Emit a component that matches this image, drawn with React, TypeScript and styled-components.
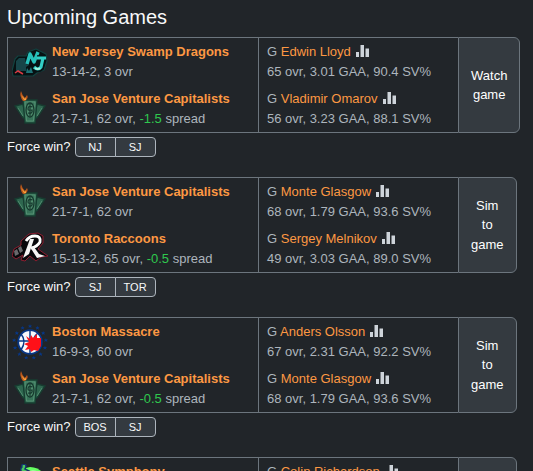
import React from "react";
import styled, { createGlobalStyle } from "styled-components";

const GlobalStyle = createGlobalStyle`
  *, *::before, *::after { box-sizing: border-box; }
  body {
    margin: 0;
    background: #212529;
    color: #f8f9fa;
    font-family: "Liberation Sans", Arial, sans-serif;
    font-size: 13px;
    line-height: 1.5;
  }
`;

const Page = styled.main`
  padding: 5px 7px 0;
`;

const Heading = styled.h2`
  margin: 0 0 8px;
  font-size: 20px;
  line-height: 24px;
  font-weight: 400;
`;

const GameList = styled.div`
  display: flex;
  flex-direction: column;
  gap: 20px;
`;

const Card = styled.div`
  display: flex;
`;

const Matchup = styled.div`
  display: grid;
  flex: 1 1 0;
  grid-template-columns: minmax(0, 5fr) minmax(0, 4fr);
  max-width: 451px;
  border: 1px solid #6c757d;
  border-right: 0;
`;

const Column = styled.div<{ $divided?: boolean }>`
  display: flex;
  flex-direction: column;
  gap: 8px;
  padding: 4px ${(p) => (p.$divided ? 8 : 4)}px;
  border-left: ${(p) => (p.$divided ? "1px solid #6c757d" : "0")};
  white-space: nowrap;
`;

const TeamRow = styled.div`
  display: flex;
  align-items: center;
  gap: 4px;
`;

const LogoSvg = styled.svg`
  width: 36px;
  height: 36px;
  flex: none;
`;

const Details = styled.div`
  color: #adb5bd;
`;

const Line = styled.div`
  height: 20px;
  line-height: 20px;

  & + & {
    height: 19px;
    line-height: 19px;
  }
`;

const Link = styled.a<{ $bold?: boolean }>`
  color: #fd9843;
  font-weight: ${(p) => (p.$bold ? 700 : 400)};
  text-decoration: none;

  &:hover { text-decoration: underline; }
`;

const Spread = styled.span`
  color: #2fc84e;
`;

const StatsButton = styled.button`
  margin: 0 0 0 5px;
  padding: 0;
  border: 0;
  background: none;
  color: #ced4da;
  line-height: 1;
  vertical-align: -2px;
  cursor: pointer;

  svg { display: block; }
`;

const ActionButton = styled.button`
  width: min-content;
  padding: 0 12px;
  border: 1px solid #6c757d;
  border-radius: 0 6px 6px 0;
  background: #343a40;
  color: #fff;
  font: inherit;
  cursor: pointer;
`;

const ForceRow = styled.div`
  display: flex;
  align-items: center;
  gap: 4px;
  height: 20px;
  margin-top: 4px;
`;

const ForceGroup = styled.div`
  display: flex;
`;

const ForceButton = styled.button`
  width: 41px;
  height: 20px;
  padding: 0;
  border: 1px solid #adb5bd;
  border-radius: 4px 0 0 4px;
  background: #343a40;
  color: #f8f9fa;
  font: inherit;
  font-size: 11px;
  line-height: 18px;
  cursor: pointer;

  & + & {
    margin-left: -1px;
    border-radius: 0 4px 4px 0;
  }
`;

type TeamKey = "NJ" | "SJ" | "TOR" | "BOS" | "SEA";

function SwampDragonsLogo() {
  return (
    <LogoSvg viewBox="0 0 36 36" aria-hidden="true">
      <path d="M3 15 6 12H14L16 8 24 5 34 10 35 17 32 26 25 29 21 32H1L0 27Z" fill="#071113" stroke="#12413f" strokeWidth="1.2" strokeLinejoin="round" />
      <path d="M4 17 7 14H13L14 20 17 21 14 23V27H4Z" fill="#174448" />
      <path d="M14 29 15 24 17 27 19 23 21 29Z" fill="#1c7377" />
      <path d="M3 29 6 27 11 30" fill="none" stroke="#d83b43" strokeWidth="1.500" />
      <path d="M15 20 18 10 22 18 26 8" fill="none" stroke="#27c0ba" strokeWidth="3.4" strokeLinejoin="round" />
      <path d="M25 14H34M31 14 29 24Q26 27 22 23" fill="none" stroke="#061315" strokeWidth="5.5" strokeLinejoin="round" />
      <path d="M25 14H34M31 14 29 23Q26 27 22 23" fill="none" stroke="#32cec5" strokeWidth="3.2" strokeLinejoin="round" />
      <path d="M28 24Q26 26 23 24" fill="none" stroke="#a2f0db" strokeWidth="2" />
    </LogoSvg>
  );
}

function VentureCapitalistsLogo() {
  return (
    <LogoSvg viewBox="0 0 36 36" aria-hidden="true">
      <path d="M3 15 11 13 14 28 11 27Z M25 13 33 15 25 27 22 28Z" fill="#2e674f" stroke="#173c30" strokeWidth="1.4" />
      <path d="M6 17 11 25M30 17 25 25" fill="none" stroke="#508b6e" />
      <path d="M11 9H25L23 32H13Z" fill="#377359" stroke="#173e31" strokeWidth="1.3" />
      <path d="M13 11H23L21.500 30H14.500Z" fill="none" stroke="#5b9879" strokeWidth=".8" />
      <ellipse cx="18" cy="19" rx="4" ry="7" fill="#4f8c6d" stroke="#16382d" strokeWidth="1.3" />
      <path d="M20.500 16Q16 14 16 18 16 20 20 19 21 23 16 22M18 13V25" fill="none" stroke="#16382d" strokeWidth="1.2" />
      <path d="M11 10Q7 5 9 0 10 4 13 7L15 4Q17 7 13 10Z" fill="#b9571b" />
      <path d="M12 9 9 4 13 8 14 6 14 9Z" fill="#f7a43c" />
    </LogoSvg>
  );
}

function RaccoonsLogo() {
  return (
    <LogoSvg viewBox="0 0 36 36" aria-hidden="true">
      <g transform="translate(0 -2)">
        <path d="M9 12 17 5 26 4 31 7 31 14 26 20 36 27 29 28 24 32 18 27 13 32 9 31 11 26 4 30 0 27 2 20 9 16Z" fill="#08080b" stroke="#8c1e30" strokeWidth="1" />
        <path d="M2 22 5 20 7 25 3 27ZM6 19 9 17 11 22 8 24Z" fill="#69696c" />
        <path d="M14 12Q17 7 23 7 29 7 28 13 25 18 19 19" fill="none" stroke="#fff" strokeWidth="2.800" />
        <path d="M18 10H22L17 25 11 29Z" fill="#f5f5f5" />
        <path d="M18 18H22L27 25 33 27 25 29Z" fill="#f5f5f5" />
      </g>
    </LogoSvg>
  );
}

function MassacreLogo() {
  const stars = Array.from({ length: 13 }, (_, i) => {
    const angle = (i / 13) * Math.PI * 2 - Math.PI / 2;
    return [18 + Math.cos(angle) * 16, 18 + Math.sin(angle) * 16];
  });
  return (
    <LogoSvg viewBox="0 0 36 36" aria-hidden="true">
      {stars.map(([x, y]) => (
        <path key={`${x},${y}`} transform={`translate(${x} ${y})`} d="M0-2 .5-.6 2-.5 1 .5 1.500 2 0 1-1.500 2-1 .5-2-.5-.5-.6Z" fill="#073787" />
      ))}
      <circle cx="18" cy="18" r="11.800" fill="#f7f8fb" stroke="#073787" strokeWidth="1.800" />
      <path d="M18 6V30M6 17H30M9 10Q15 17 9 26M26 9Q21 13 22 17" fill="none" stroke="#073787" strokeWidth="1.500" />
      <path d="M14 12 18 15 19 11 21 14 25 10 25 14 29 14 29 22 26 27 22 26 19 28 18 25 13 26 16 22 12 20 17 18Z" fill="#ff1018" />
    </LogoSvg>
  );
}

function SymphonyLogo() {
  return (
    <LogoSvg viewBox="0 0 36 36" aria-hidden="true">
      <path d="M4 20Q5 5 18 3 26 3 31 9 35 20 31 29 20 34 8 31 4 28 4 20Z" fill="#66ff61" />
      <path d="M12 10Q18 6 26 8M7 16Q14 11 24 13" fill="none" stroke="#d2ffd0" strokeWidth="1.500" />
      <path d="M11 9Q7 6 10 3 9 0 13 0 15 2 13 5L17 7 14 10" fill="#48c760" stroke="#15346e" strokeWidth="1.500" />
    </LogoSvg>
  );
}

const logos: Record<TeamKey, () => React.JSX.Element> = {
  NJ: SwampDragonsLogo,
  SJ: VentureCapitalistsLogo,
  TOR: RaccoonsLogo,
  BOS: MassacreLogo,
  SEA: SymphonyLogo,
};

interface Team {
  key: TeamKey;
  name: string;
  record: string;
  spread?: string;
  goalie: string;
  stats: string;
}

interface Game {
  action: string;
  teams: [Team, Team];
}

const sanJose = {
  key: "SJ" as const,
  name: "San Jose Venture Capitalists",
  record: "21-7-1, 62 ovr",
  goalie: "Monte Glasgow",
  stats: "68 ovr, 1.79 GAA, 93.6 SV%",
};

const games: Game[] = [
  {
    action: "Watch game",
    teams: [
      { key: "NJ", name: "New Jersey Swamp Dragons", record: "13-14-2, 3 ovr", goalie: "Edwin Lloyd", stats: "65 ovr, 3.01 GAA, 90.4 SV%" },
      { ...sanJose, spread: "-1.5", goalie: "Vladimir Omarov", stats: "56 ovr, 3.23 GAA, 88.1 SV%" },
    ],
  },
  {
    action: "Sim to game",
    teams: [
      sanJose,
      { key: "TOR", name: "Toronto Raccoons", record: "15-13-2, 65 ovr", spread: "-0.5", goalie: "Sergey Melnikov", stats: "49 ovr, 3.03 GAA, 89.0 SV%" },
    ],
  },
  {
    action: "Sim to game",
    teams: [
      { key: "BOS", name: "Boston Massacre", record: "16-9-3, 60 ovr", goalie: "Anders Olsson", stats: "67 ovr, 2.31 GAA, 92.2 SV%" },
      { ...sanJose, spread: "-0.5" },
    ],
  },
  {
    action: "Sim to game",
    teams: [
      { key: "SEA", name: "Seattle Symphony", record: "14-12-3, 58 ovr", goalie: "Colin Richardson", stats: "62 ovr, 2.64 GAA, 90.9 SV%" },
      { ...sanJose, spread: "-0.5" },
    ],
  },
];

function TeamInfo({ team }: { team: Team }) {
  const Logo = logos[team.key];
  return (
    <TeamRow>
      <Logo />
      <Details>
        <Line><Link href="#" $bold>{team.name}</Link></Line>
        <Line>
          {team.record}
          {team.spread && <>, <Spread>{team.spread}</Spread> spread</>}
        </Line>
      </Details>
    </TeamRow>
  );
}

function GoalieInfo({ team }: { team: Team }) {
  return (
    <Details>
      <Line>
        G <Link href="#">{team.goalie}</Link>
        <StatsButton type="button" aria-label={`Stats for ${team.goalie}`}>
          <svg width="13" height="13" viewBox="0 0 13 13" fill="currentColor" aria-hidden="true">
            <path d="M0 7H3V12H0ZM4.500 0H8V12H4.500ZM9.500 3.500H13V12H9.500Z" />
          </svg>
        </StatsButton>
      </Line>
      <Line>{team.stats}</Line>
    </Details>
  );
}

function GameEntry({ game }: { game: Game }) {
  return (
    <section>
      <Card>
        <Matchup>
          <Column>
            {game.teams.map((team) => <TeamInfo key={team.key} team={team} />)}
          </Column>
          <Column $divided>
            {game.teams.map((team) => <GoalieInfo key={team.key} team={team} />)}
          </Column>
        </Matchup>
        <ActionButton type="button">{game.action}</ActionButton>
      </Card>
      <ForceRow>
        <span>Force win?</span>
        <ForceGroup role="group" aria-label="Force win?">
          {game.teams.map((team) => <ForceButton key={team.key} type="button">{team.key}</ForceButton>)}
        </ForceGroup>
      </ForceRow>
    </section>
  );
}

export default function App() {
  return (
    <>
      <GlobalStyle />
      <Page>
        <Heading>Upcoming Games</Heading>
        <GameList>
          {games.map((game, i) => <GameEntry key={i} game={game} />)}
        </GameList>
      </Page>
    </>
  );
}
